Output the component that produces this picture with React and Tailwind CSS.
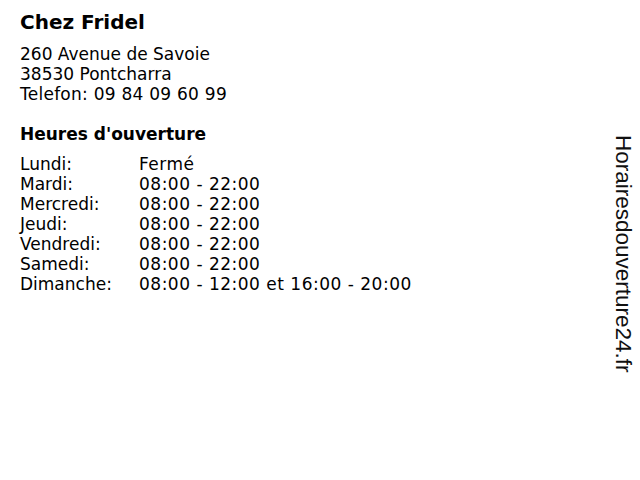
import React from "react";

const hours = [
  ["Lundi:", "Fermé"],
  ["Mardi:", "08:00 - 22:00"],
  ["Mercredi:", "08:00 - 22:00"],
  ["Jeudi:", "08:00 - 22:00"],
  ["Vendredi:", "08:00 - 22:00"],
  ["Samedi:", "08:00 - 22:00"],
  ["Dimanche:", "08:00 - 12:00 et 16:00 - 20:00"],
];

export default function App() {
  return (
    <div className="relative w-[640px] h-[480px] bg-white text-black overflow-hidden" style={{ fontFamily: '"DejaVu Sans", Verdana, sans-serif' }}>
      <div className="px-5 pt-[8px]">
        <h1 className="text-[20px] font-bold leading-[28px]">Chez Fridel</h1>
        <div className="mt-[8px] text-[17px] leading-5">
          <div>260 Avenue de Savoie</div>
          <div>38530 Pontcharra</div>
          <div className="tracking-[0.25px]">Telefon: 09 84 09 60 99</div>
        </div>
        <h2 className="mt-[20px] text-[17px] font-bold leading-5">Heures d'ouverture</h2>
        <div className="mt-[10px] text-[17px] leading-5">
          {hours.map(([d, h]) => (
            <div key={d} className="flex">
              <div className="w-[119px]">{d}</div>
              <div className="tracking-[0.5px]">{h}</div>
            </div>
          ))}
        </div>
      </div>
      <div
        className="absolute left-[612px] top-[135px] text-[22.5px] leading-[22px] text-[#111]"
        style={{ fontFamily: '"Liberation Sans", Arial, sans-serif', writingMode: "vertical-rl" }}
      >
        Horairesdouverture24.fr
      </div>
    </div>
  );
}
